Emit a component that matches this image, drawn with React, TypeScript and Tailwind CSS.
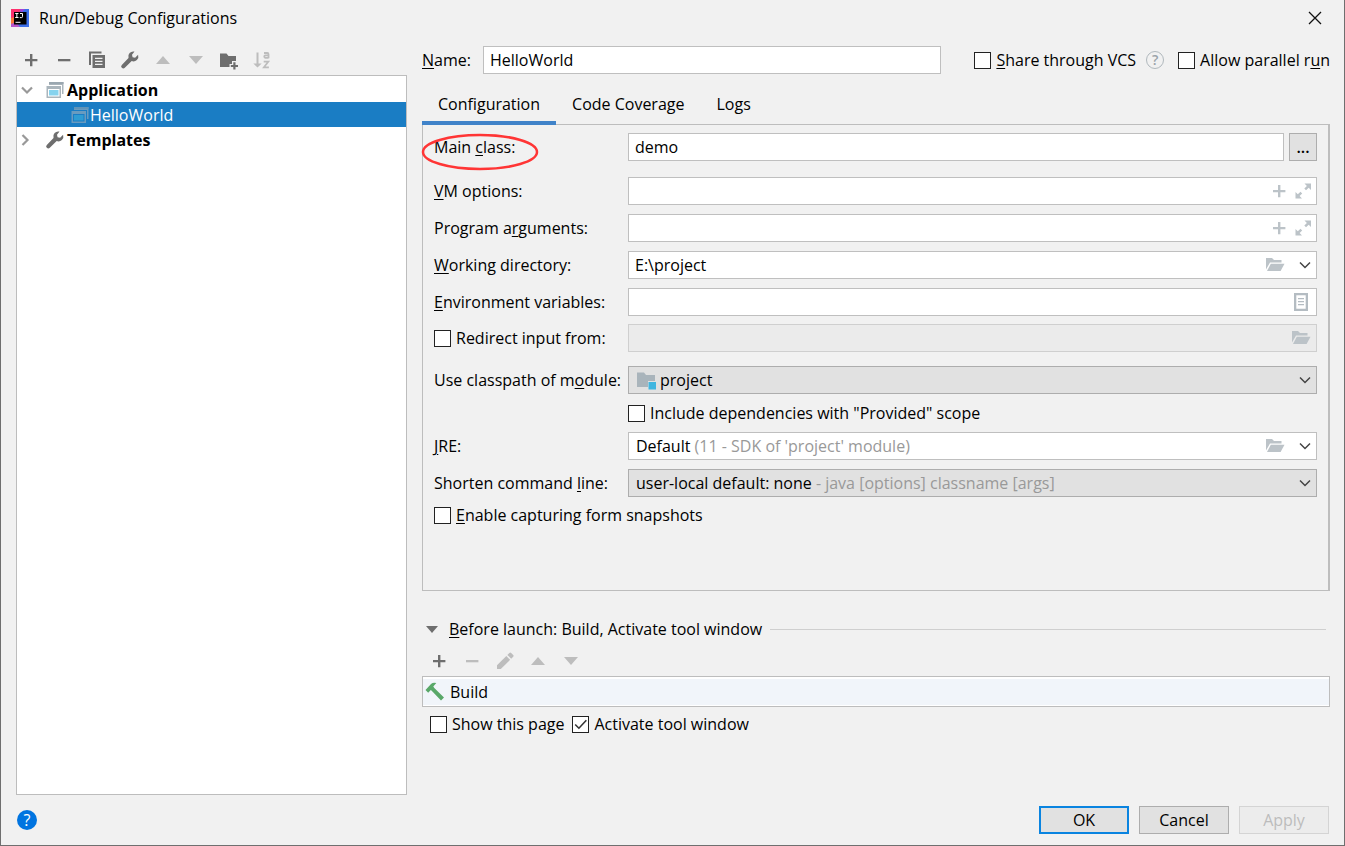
import React, { useState } from 'react';

type IconProps = { className?: string };

const svgProps = { width: 20, height: 20, viewBox: '0 0 20 20', fill: 'currentColor', 'aria-hidden': true };

const PlusIcon = ({ className }: IconProps) => (
  <svg {...svgProps} className={className}>
    <path d="M9 4h2.4v5h5v2.3h-5v5H9v-5H4V9h5z" />
  </svg>
);

const MinusIcon = () => (
  <svg {...svgProps}>
    <path d="M4 9h12.4v2.3H4z" />
  </svg>
);

const CopyIcon = () => (
  <svg {...svgProps}>
    <path d="M2 1.500h12.500v2H4v11.500H2z" />
    <path fillRule="evenodd" d="M5.500 5H18v13H5.500zM8 7.800V9h7.500V7.800zm0 3V12h7.500v-1.200zm0 3V15h7.500v-1.200z" />
  </svg>
);

const WrenchIcon = () => (
  <svg {...svgProps}>
    <path d="M14.500 1.600a5 5 0 0 0-6 6.400L1.800 14.900a2.100 2.100 0 0 0 0 2.900 2.100 2.100 0 0 0 3 0l6.900-6.700a5 5 0 0 0 6.400-6.300l-3 3-2.500-.6-.6-2.500z" />
  </svg>
);

const UpIcon = () => (
  <svg {...svgProps}>
    <path d="M10 6l7 8H3z" />
  </svg>
);

const DownIcon = () => (
  <svg {...svgProps}>
    <path d="M10 14l7-8H3z" />
  </svg>
);

const NewFolderIcon = () => (
  <svg {...svgProps}>
    <path d="M1 3.500h6.500l2 2.500H17v5h-4v3h-2.500v3H1z" />
    <path d="M14.300 12.300h2.200v2.600H19V17h-2.500v2.500h-2.200V17h-2.500v-2.100h2.500z" />
  </svg>
);

const SortIcon = () => (
  <svg {...svgProps}>
    <path d="M4.500 2.500h2v11h3.200l-4.200 4-4.200-4h3.200z" />
    <g fill="none" stroke="currentColor" strokeWidth="1.800">
      <path d="M12 3h3.300a1.200 1.200 0 0 1 1.200 1.200V8.200M16.500 5.300h-3.300a1.300 1.300 0 0 0 0 2.500h3.300" />
      <path d="M11.700 11.700h4.600l-4.400 5.600h5" />
    </g>
  </svg>
);

const PencilIcon = () => (
  <svg {...svgProps}>
    <path d="M2 14.300L11.300 5l3.800 3.800L5.800 18H2z" />
    <path d="M12.400 3.900l2-2a1.300 1.300 0 0 1 1.800 0l2 2a1.300 1.300 0 0 1 0 1.800l-2 2z" />
  </svg>
);

const HammerIcon = () => (
  <svg {...svgProps} className="text-[#59a869]">
    <path d="M.5 8L6 2q2-1.700 5.300-.9L8.300 4.500l1 1.400 9.700 9.500-3 3.200-9.300-9.900L5.800 8 3.200 10.800z" />
  </svg>
);

const ApplicationIcon = ({ dim }: { dim?: boolean }) => (
  <svg width="18" height="18" viewBox="0 0 18 18" aria-hidden="true" className={dim ? 'opacity-55' : ''}>
    <path d="M3 1h14.500v12H16V4H3z" fill="#aab5bc" />
    <path d="M3 1h14.500v2H3z" fill="#9aa7b0" />
    <path d="M.5 5h14.500v12H.5z" fill="#aab5bc" />
    <path d="M2 8h11.500v7.500H2z" fill={dim ? '#1a7dc4' : '#fff'} />
    <path d="M3 9h9.500v5.500H3z" fill={dim ? '#40b6e0' : '#86d3ee'} />
  </svg>
);

const OpenFolderIcon = () => (
  <svg {...svgProps} className="text-[#bcc3c8]">
    <path d="M1 3h6l2 2h7.500v2.500H5L1 14.500z" />
    <path d="M5.800 8.700H19.500L15.600 16H2z" />
  </svg>
);

const ExpandIcon = () => (
  <svg {...svgProps} className="text-[#bcc3c8]">
    <path d="M11.500 2.500H18V9l-2.300-2.300-2.700 2.600-1.700-1.700L13.900 5z" />
    <path d="M9 17.500H2.500V11l2.300 2.300 2.700-2.600 1.700 1.700L6.600 15z" />
  </svg>
);

const ListIcon = () => (
  <svg {...svgProps} className="text-[#b4bcc2]">
    <path fillRule="evenodd" d="M3 1h14v18H3zM5.300 3.300v13.400h9.400V3.300z" />
    <path d="M7 6h6v1.200H7zM7 9h6v1.200H7zM7 12h6v1.200H7z" />
  </svg>
);

const ChevronIcon = ({ className }: IconProps) => (
  <svg width="12" height="12" viewBox="0 0 12 12" fill="none" stroke="currentColor" strokeWidth="1.500" className={className} aria-hidden="true">
    <path d="M1 3.500l5 5 5-5" />
  </svg>
);

const TreeArrow = ({ className }: IconProps) => (
  <svg width="12" height="12" viewBox="0 0 12 12" fill="none" stroke="#999" strokeWidth="2.200" className={className} aria-hidden="true">
    <path d="M1 3.500l5 5 5-5" />
  </svg>
);

const ModuleIcon = () => (
  <svg {...svgProps}>
    <path d="M1 2.500h7l2 2.500h9v6h-7v6H1z" fill="#a9b4bb" />
    <path d="M12.500 12h7.500v7.500h-7.500z" fill="#40b6e0" />
  </svg>
);

const LogoIcon = () => (
  <svg width="18" height="18" viewBox="0 0 18 18" aria-hidden="true">
    <path d="M0 0h18v18H0z" fill="#3d6fe8" />
    <path d="M0 0h11L3 9.500 0 12z" fill="#fe2f6d" />
    <path d="M0 9l4-1v10H0z" fill="#f9763a" />
    <path d="M0 15l5-2 4 5H0z" fill="#b655c8" />
    <path d="M9 0h5l-4 4z" fill="#a044d8" />
    <path d="M3 3h12.500v12.500H3z" fill="#000" />
    <path d="M4.200 4.500h3.300M5.850 4.500v4M4.200 8.500h3.300M9 4.500h2.500v3.200q0 .9-1 .9H8.800M4.500 13.300h5" stroke="#fff" fill="none" />
  </svg>
);

const inputClass = 'h-7 w-full min-w-0 border border-[#bfbfbf] bg-white pl-1.5 text-black outline-none';

const ToolButton = ({ label, disabled, children }: { label: string; disabled?: boolean; children: React.ReactNode }) => (
  <button
    type="button"
    aria-label={label}
    disabled={disabled}
    className="flex h-7 w-[33px] items-center justify-center text-[#6e6e6e] disabled:text-[#bdbdbd]"
  >
    {children}
  </button>
);

interface CheckBoxProps {
  id: string;
  defaultChecked?: boolean;
  children: React.ReactNode;
}

const CheckBox = ({ id, defaultChecked, children }: CheckBoxProps) => (
  <label htmlFor={id} className="flex items-center gap-[5px] whitespace-nowrap">
    <span className="relative flex">
      <input
        id={id}
        type="checkbox"
        defaultChecked={defaultChecked}
        className="peer size-[17px] appearance-none border border-[#222] bg-white"
      />
      <svg viewBox="0 0 16 16" className="pointer-events-none absolute inset-0 hidden size-[17px] peer-checked:block" fill="none" stroke="#333" strokeWidth="1.500">
        <path d="M3 8l3.500 3.500L13.500 4" />
      </svg>
    </span>
    <span>{children}</span>
  </label>
);

const U = ({ children }: { children: React.ReactNode }) => (
  <span className="underline decoration-1 underline-offset-2">{children}</span>
);

interface RowProps {
  htmlFor?: string;
  label: React.ReactNode;
  className?: string;
  children?: React.ReactNode;
}

const Row = ({ htmlFor, label, className = '', children }: RowProps) => (
  <div className={`flex min-h-7 items-center ${className}`}>
    <div className="w-[194px] shrink-0">{htmlFor ? <label htmlFor={htmlFor}>{label}</label> : label}</div>
    <div className="relative flex min-w-0 flex-1 items-center">{children}</div>
  </div>
);

interface DropDownProps {
  id: string;
  value: string;
  hint?: string;
  white?: boolean;
  icon?: React.ReactNode;
}

// The closed select shows a two-tone value, so its own text is transparent
const DropDown = ({ id, value, hint, white, icon }: DropDownProps) => (
  <>
    <select
      id={id}
      className={`h-7 w-full appearance-none border pl-1.5 text-transparent outline-none ${
        white ? 'border-[#bfbfbf] bg-white' : 'border-[#adadad] bg-[#e1e1e1]'
      }`}
    >
      <option>{hint ? `${value} ${hint}` : value}</option>
    </select>
    <div className="pointer-events-none absolute inset-0 flex items-center pr-1.5 pl-2" aria-hidden="true">
      {icon && <span className="mr-1">{icon}</span>}
      <span className="flex-1 truncate">
        {value} {hint && <span className="text-[#999]">{hint}</span>}
      </span>
      {white && <span className="mr-[14px]"><OpenFolderIcon /></span>}
      <ChevronIcon className="text-[#444]" />
    </div>
  </>
);

const tabs = ['Configuration', 'Code Coverage', 'Logs'];

export default function App() {
  const [tab, setTab] = useState('Configuration');

  return (
    <div className="flex min-h-screen flex-col border-r border-b border-l border-[#6f6f6f] bg-[#f1f1f1] font-['Open_Sans','Noto_Sans',sans-serif] text-base leading-6 text-black">
      {/* Title bar */}
      <header className="flex h-9 items-center gap-2.5 pr-[22px] pl-2.5">
        <LogoIcon />
        <h1 className="flex-1">Run/Debug Configurations</h1>
        <button type="button" aria-label="Close">
          <svg width="14" height="14" viewBox="0 0 14 14" stroke="#111" strokeWidth="1.300">
            <path d="M1 1l12 12M13 1L1 13" />
          </svg>
        </button>
      </header>

      <main className="flex flex-1 gap-[15px] pt-2.5 pr-[14px] pl-[15px]">
        {/* Configurations tree */}
        <aside className="flex w-[391px] shrink-0 flex-col">
          <div className="-ml-0.5 flex h-[29px] items-center pb-px">
            <ToolButton label="Add"><PlusIcon /></ToolButton>
            <ToolButton label="Remove"><MinusIcon /></ToolButton>
            <ToolButton label="Copy"><CopyIcon /></ToolButton>
            <ToolButton label="Edit templates"><WrenchIcon /></ToolButton>
            <ToolButton label="Move up" disabled><UpIcon /></ToolButton>
            <ToolButton label="Move down" disabled><DownIcon /></ToolButton>
            <ToolButton label="Create folder"><NewFolderIcon /></ToolButton>
            <ToolButton label="Sort" disabled><SortIcon /></ToolButton>
          </div>
          <ul className="flex-1 border border-[#bdbdbd] bg-white pt-px">
            <li>
              <div className="flex h-[25px] items-center pl-1 font-bold">
                <TreeArrow className="mr-[13px]" />
                <ApplicationIcon />
                <span className="ml-[3px]">Application</span>
              </div>
              <ul>
                <li className="flex h-[25px] items-center bg-[#1a7dc4] pl-[54px] text-white">
                  <ApplicationIcon dim />
                  <span className="ml-px">HelloWorld</span>
                </li>
              </ul>
            </li>
            <li className="flex h-[25px] items-center pl-0.5 font-bold">
              <TreeArrow className="mr-3.5 -rotate-90" />
              <span className="text-[#6e6e6e]"><WrenchIcon /></span>
              <span className="ml-0.5">Templates</span>
            </li>
          </ul>
        </aside>

        <section className="flex min-w-0 flex-1 flex-col">
          <div className="flex h-7 items-center">
            <label htmlFor="name" className="w-[61px] shrink-0"><U>N</U>ame:</label>
            <input id="name" defaultValue="HelloWorld" className={`${inputClass} max-w-[458px]`} />
            <div className="ml-auto flex items-center gap-3.5 pl-4">
              <div className="flex items-center gap-2.5">
                <CheckBox id="share"><U>S</U>hare through VCS</CheckBox>
                <button type="button" aria-label="Help on sharing" className="flex size-[18px] items-center justify-center rounded-full border border-[#b0b8bd] text-sm font-semibold text-[#9aa3a9]">?</button>
              </div>
              <CheckBox id="parallel">Allow parallel r<U>u</U>n</CheckBox>
            </div>
          </div>

          {/* Tabs */}
          <div role="tablist" className="z-10 mt-3 -mb-px flex h-[39px]">
            {tabs.map((t) => (
              <button
                key={t}
                type="button"
                role="tab"
                aria-selected={t === tab}
                onClick={() => setTab(t)}
                className={`border-b-4 px-4 ${t === tab ? 'border-[#4083c9]' : 'border-transparent'}`}
              >
                {t}
              </button>
            ))}
          </div>

          <form className="flex-1 border border-r-2 border-[#bdbdbd] pt-2 pr-[11px] pb-6 pl-[11px]">
            <Row
              htmlFor="main-class"
              label={
                <span className="relative">
                  Main <U>c</U>lass:
                  <svg width="118" height="38" viewBox="0 0 118 38" className="pointer-events-none absolute -top-[3px] -left-[13px] max-w-none" fill="none" aria-hidden="true">
                    <ellipse cx="59" cy="19" rx="57" ry="17" stroke="#ff3535" strokeWidth="2.500" />
                  </svg>
                </span>
              }
            >
              <input id="main-class" defaultValue="demo" className={inputClass} />
              <button type="button" aria-label="Browse" className="ml-[5px] h-7 w-7 shrink-0 border border-[#adadad] bg-[#e1e1e1] leading-none font-semibold">...</button>
            </Row>
            <Row htmlFor="vm" label={<><U>V</U>M options:</>} className="mt-4">
              <input id="vm" className={inputClass} />
              <div className="absolute right-1 flex gap-1">
                <button type="button" aria-label="Insert macro"><PlusIcon className="text-[#bcc3c8]" /></button>
                <button type="button" aria-label="Expand"><ExpandIcon /></button>
              </div>
            </Row>
            <Row htmlFor="args" label={<>Program a<U>r</U>guments:</>} className="mt-[9px]">
              <input id="args" className={inputClass} />
              <div className="absolute right-1 flex gap-1">
                <button type="button" aria-label="Insert macro"><PlusIcon className="text-[#bcc3c8]" /></button>
                <button type="button" aria-label="Expand"><ExpandIcon /></button>
              </div>
            </Row>
            <Row htmlFor="workdir" label={<><U>W</U>orking directory:</>} className="mt-[9px]">
              <input id="workdir" defaultValue="E:\project" className={inputClass} />
              <div className="absolute right-1.5 flex items-center gap-[14px]">
                <button type="button" aria-label="Browse"><OpenFolderIcon /></button>
                <button type="button" aria-label="History"><ChevronIcon className="text-[#444]" /></button>
              </div>
            </Row>
            <Row htmlFor="env" label={<><U>E</U>nvironment variables:</>} className="mt-[9px]">
              <input id="env" className={inputClass} />
              <button type="button" aria-label="Edit variables" className="absolute right-1.5"><ListIcon /></button>
            </Row>
            <Row label={<CheckBox id="redirect">Redirect input from:</CheckBox>} className="mt-2">
              <input aria-label="Redirect input from" disabled className="h-7 w-full border border-[#cfcfcf] bg-[#ebebeb]" />
              <button type="button" aria-label="Browse" disabled className="absolute right-1.5"><OpenFolderIcon /></button>
            </Row>
            <Row htmlFor="module" label={<>Use classpath of m<U>o</U>dule:</>} className="mt-[14px]">
              <DropDown id="module" value="project" icon={<ModuleIcon />} />
            </Row>
            <Row label="" className="mt-[5px]">
              <CheckBox id="provided">Include dependencies with "Provided" scope</CheckBox>
            </Row>
            <Row htmlFor="jre" label={<><U>J</U>RE:</>} className="mt-[5px]">
              <DropDown id="jre" value="Default" hint="(11 - SDK of 'project' module)" white />
            </Row>
            <Row htmlFor="shorten" label={<>Shorten command <U>l</U>ine:</>} className="mt-[9px]">
              <DropDown id="shorten" value="user-local default: none" hint="- java [options] classname [args]" />
            </Row>
            <Row label={<CheckBox id="snapshots"><U>E</U>nable capturing form snapshots</CheckBox>} className="mt-1" />
          </form>

          {/* Before launch */}
          <div className="mt-[26px] flex h-6 items-center pr-1">
            <button type="button" className="flex items-center gap-[11px]">
              <svg width="12" height="8" viewBox="0 0 12 8" fill="#6e6e6e" className="ml-1" aria-hidden="true">
                <path d="M0 1h12L6 8z" />
              </svg>
              <span><U>B</U>efore launch: Build, Activate tool window</span>
            </button>
            <div className="ml-2 h-px flex-1 bg-[#cfcfcf]" />
          </div>
          <div className="flex h-[35px] items-center pt-1">
            <ToolButton label="Add task"><PlusIcon /></ToolButton>
            <ToolButton label="Remove task" disabled><MinusIcon /></ToolButton>
            <ToolButton label="Edit task" disabled><PencilIcon /></ToolButton>
            <ToolButton label="Move task up" disabled><UpIcon /></ToolButton>
            <ToolButton label="Move task down" disabled><DownIcon /></ToolButton>
          </div>
          <ul className="border border-[#bdbdbd] bg-white pt-0.5 pb-px">
            <li className="flex h-[26px] items-center gap-[5px] bg-[#f1f5fa] pl-0.5">
              <HammerIcon />
              Build
            </li>
          </ul>
          <div className="mt-[5px] mb-[59px] flex items-center gap-2 pl-2">
            <CheckBox id="show-page">Show this page</CheckBox>
            <CheckBox id="activate" defaultChecked>Activate tool window</CheckBox>
          </div>
        </section>
      </main>

      <footer className="flex items-center gap-2.5 pt-[11px] pr-[15px] pb-[11px] pl-4">
        <button type="button" aria-label="Help" className="mr-auto flex size-5 items-center justify-center rounded-full bg-[#0074e0] text-white">?</button>
        <button type="button" className="h-7 w-[90px] border-2 border-[#0a84e0] bg-[#e1e1e1] leading-5">OK</button>
        <button type="button" className="h-7 w-[90px] border border-[#adadad] bg-[#e1e1e1] leading-5">Cancel</button>
        <button type="button" disabled className="h-7 w-[90px] border border-[#d4d4d4] bg-[#ececec] leading-5 text-[#bcbcbc]">Apply</button>
      </footer>
    </div>
  );
}
